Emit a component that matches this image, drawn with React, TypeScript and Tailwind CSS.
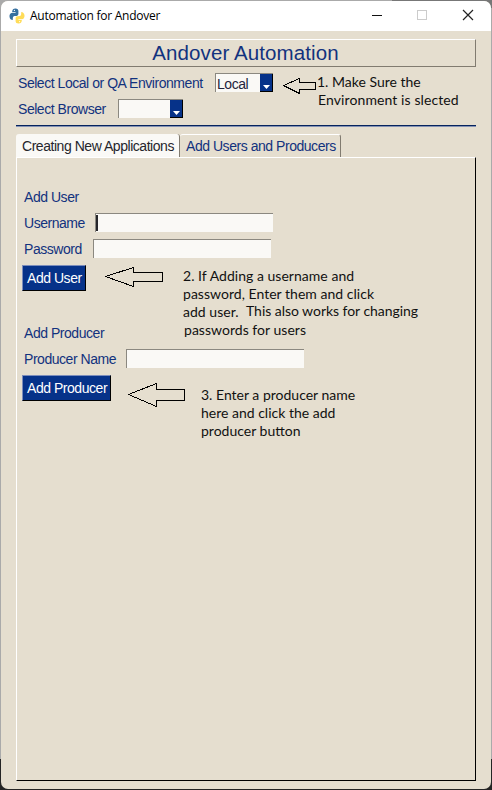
import React from 'react';

const note = "absolute whitespace-pre font-[Lato,sans-serif] text-[14px] leading-[18px] text-[#111]";

function PythonLogo() {
  return (
    <svg className="ml-[8px] h-[16px] w-[16px] shrink-0" viewBox="0 0 16 16">
      <path d="M3.2 3.4Q3.4.6 6.3.5Q9.4.4 9.4 3V6Q9.4 7.7 7.6 7.9L5.4 8.1Q3.7 8.4 3.8 10V12.1Q1 12 .5 8.8Q.2 5.2 3.2 4.7H6.6V4H3.2Z" fill="#356f9f" />
      <path d="M12.8 12.6Q12.6 15.4 9.7 15.5Q6.6 15.6 6.6 13V10Q6.6 8.5 8.4 8.3L10.6 8.1Q12.3 7.8 12.2 6V3.9Q15 4 15.5 7.2Q15.8 10.8 12.8 11.3H9.4V12H12.8Z" fill="#ffdc58" />
      <circle cx="5.4" cy="2.4" r=".6" fill="white" />
      <circle cx="10.6" cy="13.6" r=".6" fill="white" />
    </svg>
  );
}

function TitleBar() {
  return (
    <header className="flex h-[30px] shrink-0 items-center bg-white">
      <PythonLogo />
      <h1 className="ml-[5px] w-[331px] whitespace-nowrap font-['Open_Sans',sans-serif] text-[12px] tracking-[-0.25px] text-black">Automation for Andover</h1>
      <svg className="h-[30px] w-[120px]" viewBox="361 1 120 30" fill="none" shapeRendering="crispEdges">
        <path d="M372 15.5H382" stroke="#111" />
        <rect x="417.5" y="10.5" width="9" height="9" stroke="#ccc" />
        <path d="M463 10L473 20M473 10L463 20" stroke="#222" strokeWidth="1.2" shapeRendering="auto" />
      </svg>
    </header>
  );
}

function Combo({ value, className }: { value: string; className: string }) {
  return (
    <div className={`mt-[2px] flex h-[19px] border-l border-t border-[#8b8880] bg-[#faf9f6] ${className}`}>
      <span className="grow pl-px leading-[20px] text-[#24243c]">{value}</span>
      <span className="flex w-[13px] items-end justify-center border-b border-r border-black bg-[#063289] pb-[2px]">
        <svg className="h-[4px] w-[7px]" viewBox="0 0 7 4"><path d="M0 0H7L3.5 4Z" fill="white" /></svg>
      </span>
    </div>
  );
}

function Field({ label, labelWidth, inputWidth, focused = false }: { label: string; labelWidth: string; inputWidth: string; focused?: boolean }) {
  return (
    <div className="flex h-[26px] items-start">
      <span className={`whitespace-nowrap leading-[25px] ${labelWidth}`}>{label}</span>
      <div className={`mt-[2px] flex h-[19px] border-l border-t border-[#8b8880] bg-[#faf9f6] ${inputWidth}`}>
        {focused && <i className="mt-px h-[16px] w-[2px] bg-[#26262b]" />}
      </div>
    </div>
  );
}

function ActionButton({ children, className }: { children: string; className: string }) {
  return (
    <button className={`ml-[-2px] h-[26px] whitespace-nowrap border border-b-black border-l-[#7c8dbb] border-r-black border-t-[#7c8dbb] bg-[#063289] pl-[4px] text-left leading-[24px] text-white ${className}`}>{children}</button>
  );
}

export default function App() {
  return (
    <div className="relative h-[790px] w-[492px] overflow-hidden bg-[#aaa] font-['Liberation_Sans',Arial,sans-serif] text-[14px] tracking-[-0.46px] text-[#12327e]">
      <div className="absolute inset-x-0 bottom-0 h-[31px] bg-[#252525]" />
      <div className="absolute right-0 top-0 h-[8px] w-[100px] bg-[#777]" />
      <div className="relative flex h-[789px] flex-col px-px pt-px">
        <div className="flex h-[788px] flex-col overflow-hidden rounded-[7px] bg-[#e5decf]">
          <TitleBar />
          <main className="flex w-[475px] grow flex-col pl-[15px] pt-[8px]">
            <h2 className="h-[28px] shrink-0 border border-b-[#817b70] border-l-white border-r-[#817b70] border-t-white pr-px text-center text-[20.5px] leading-[26px] tracking-[0.1px]">Andover Automation</h2>
            <div className="mt-[4px] flex h-[26px] shrink-0 items-start pl-[2px]">
              <span className="w-[197px] whitespace-nowrap leading-[25px]">Select Local or QA Environment</span>
              <Combo value="Local" className="w-[58px]" />
            </div>
            <div className="flex h-[26px] shrink-0 items-start pl-[2px]">
              <span className="w-[100px] leading-[25px]">Select Browser</span>
              <Combo value="" className="w-[65px]" />
            </div>
            <hr className="mt-[2px] h-[2px] shrink-0 border-b border-t border-b-[#8492b5] border-t-[#06235d]" />
            <nav className="mt-[7px] flex h-[23px] shrink-0 whitespace-nowrap leading-[25px]">
              <div className="w-[164px] rounded-t-[3px] border-r border-[#817b70] bg-[#faf9f6] pl-[6px] text-[#26262c]">Creating New Applications</div>
              <div className="w-[161px] rounded-t-[3px] border-r border-t border-r-[#817b70] border-t-white pl-[6px] leading-[23px]">Add Users and Producers</div>
            </nav>
            <section className="flex h-[624px] shrink-0 flex-col border border-b-black border-l-white border-r-black border-t-white pl-[7px] pt-[27px]">
              <h3 className="h-[26px] leading-[25px]">Add User</h3>
              <Field label="Username" labelWidth="w-[71px]" inputWidth="w-[178px]" focused />
              <Field label="Password" labelWidth="w-[69px]" inputWidth="w-[178px]" />
              <div className="mt-[2px] flex h-[26px]"><ActionButton className="w-[64px]">Add User</ActionButton></div>
              <h3 className="mt-[30px] h-[26px] leading-[25px]">Add Producer</h3>
              <Field label="Producer Name" labelWidth="w-[102px]" inputWidth="w-[178px]" />
              <div className="mt-[2px] flex h-[26px]"><ActionButton className="w-[89px]">Add Producer</ActionButton></div>
            </section>
          </main>
        </div>
      </div>

      <svg className="pointer-events-none absolute inset-0 h-[790px] w-[492px]" fill="none" stroke="black" strokeLinejoin="bevel" shapeRendering="crispEdges">
        <path d="M283.5 85.5L299.5 78.5V82.5H315.5V89.5H299.5V93.5Z" />
        <path d="M105.5 276.5L133.5 267.5V272.5H162.5V281.5H133.5V286.5Z" />
        <path d="M128.5 394.5L156.5 383.5V389.5H184.5V400.5H156.5V406.5Z" />
      </svg>
      <p className={`${note} left-[317px] top-[73px] tracking-[0px]`}>1. Make Sure the</p>
      <p className={`${note} left-[318px] top-[91px] tracking-[0.1px]`}>Environment is slected</p>
      <p className={`${note} left-[183px] top-[267px] tracking-[0.03px]`}>2. If Adding a username and</p>
      <p className={`${note} left-[183px] top-[285px] tracking-[0.03px]`}>password, Enter them and click</p>
      <p className={`${note} left-[183px] top-[303px] tracking-[0.03px]`}>add user.</p>
      <p className={`${note} left-[246px] top-[302px] tracking-[-0.04px]`}>This also works for changing</p>
      <p className={`${note} left-[184px] top-[321px] tracking-[0.03px]`}>passwords for users</p>
      <p className={`${note} left-[201px] top-[386px] tracking-[0px]`}>3. Enter a producer name</p>
      <p className={`${note} left-[201px] top-[404px] tracking-[0px]`}>here and click the add</p>
      <p className={`${note} left-[201px] top-[422px] tracking-[0px]`}>producer button</p>
    </div>
  );
}
